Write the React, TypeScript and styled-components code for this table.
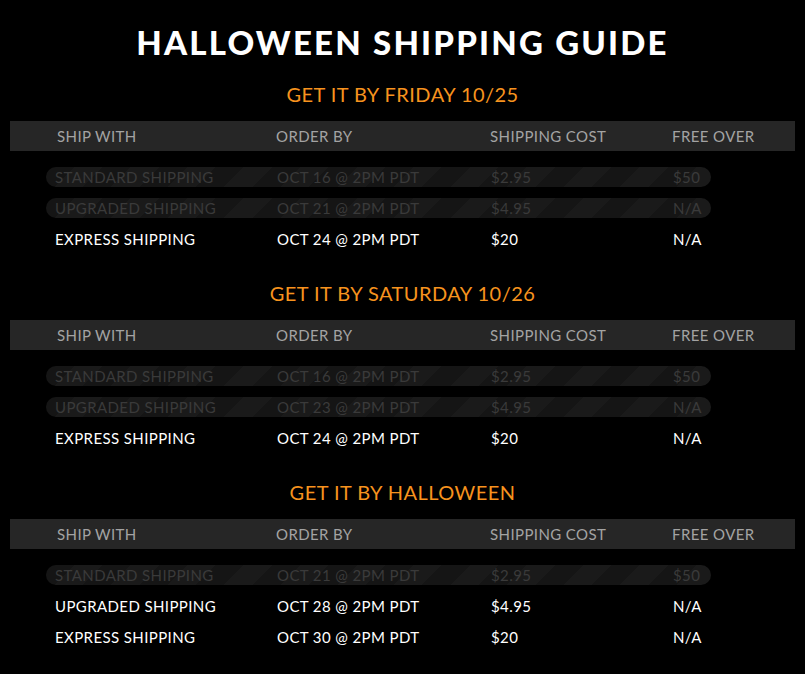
import styled, { createGlobalStyle } from "styled-components";

interface ShipRow {
  method: string;
  orderBy: string;
  cost: string;
  freeOver: string;
  closed?: boolean;
}

interface Section {
  title: string;
  rows: ShipRow[];
}

const sections: Section[] = [
  {
    title: "GET IT BY FRIDAY 10/25",
    rows: [
      { method: "STANDARD SHIPPING", orderBy: "OCT 16 @ 2PM PDT", cost: "$2.95", freeOver: "$50", closed: true },
      { method: "UPGRADED SHIPPING", orderBy: "OCT 21 @ 2PM PDT", cost: "$4.95", freeOver: "N/A", closed: true },
      { method: "EXPRESS SHIPPING", orderBy: "OCT 24 @ 2PM PDT", cost: "$20", freeOver: "N/A" },
    ],
  },
  {
    title: "GET IT BY SATURDAY 10/26",
    rows: [
      { method: "STANDARD SHIPPING", orderBy: "OCT 16 @ 2PM PDT", cost: "$2.95", freeOver: "$50", closed: true },
      { method: "UPGRADED SHIPPING", orderBy: "OCT 23 @ 2PM PDT", cost: "$4.95", freeOver: "N/A", closed: true },
      { method: "EXPRESS SHIPPING", orderBy: "OCT 24 @ 2PM PDT", cost: "$20", freeOver: "N/A" },
    ],
  },
  {
    title: "GET IT BY HALLOWEEN",
    rows: [
      { method: "STANDARD SHIPPING", orderBy: "OCT 21 @ 2PM PDT", cost: "$2.95", freeOver: "$50", closed: true },
      { method: "UPGRADED SHIPPING", orderBy: "OCT 28 @ 2PM PDT", cost: "$4.95", freeOver: "N/A" },
      { method: "EXPRESS SHIPPING", orderBy: "OCT 30 @ 2PM PDT", cost: "$20", freeOver: "N/A" },
    ],
  },
];

const GlobalStyle = createGlobalStyle`
  body {
    margin: 0;
    background: #000;
    font-family: Lato, "Open Sans", sans-serif;
  }
`;

export default function App() {
  return (
    <Page>
      <GlobalStyle />
      <Title>HALLOWEEN SHIPPING GUIDE</Title>
      {sections.map((section) => (
        <SectionBlock key={section.title}>
          <Subtitle>{section.title}</Subtitle>
          <HeaderBar>
            <span>SHIP WITH</span>
            <span>ORDER BY</span>
            <span>SHIPPING COST</span>
            <span>FREE OVER</span>
          </HeaderBar>
          <Rows>
            {section.rows.map((row) => (
              <Row key={row.method} $closed={row.closed}>
                <span>{row.method}</span>
                <span>{row.orderBy}</span>
                <span>{row.cost}</span>
                <span>{row.freeOver}</span>
              </Row>
            ))}
          </Rows>
        </SectionBlock>
      ))}
    </Page>
  );
}

const Page = styled.div`
  width: 805px;
  height: 674px;
  background: #000;
  padding-top: 23px;
  box-sizing: border-box;
  overflow: hidden;
`;

const Title = styled.h1`
  margin: 0;
  height: 40px;
  line-height: 38px;
  text-align: center;
  color: #fff;
  font-size: 33px;
  font-weight: 900;
  letter-spacing: 2.2px;
`;

const SectionBlock = styled.section`
  padding-top: 17px;
  padding-bottom: 13px;
  & + & {
    padding-top: 0;
  }
`;

const Subtitle = styled.h2`
  margin: 0 0 13px;
  height: 28px;
  line-height: 28px;
  text-align: center;
  color: #f7931e;
  font-size: 20px;
  font-weight: 400;
  letter-spacing: 0.45px;
`;

const HeaderBar = styled.div`
  margin: 0 10px;
  height: 30px;
  background: #262626;
  display: grid;
  grid-template-columns: 219px 214px 182px 1fr;
  align-items: center;
  padding-left: 47px;
  color: #a3a3a3;
  font-size: 15px;
  letter-spacing: 0.4px;
`;

const Rows = styled.div`
  display: flex;
  flex-direction: column;
  gap: 11px;
  padding-top: 16px;
  padding-bottom: 17px;
`;

const Row = styled.div<{ $closed?: boolean }>`
  margin-left: 46px;
  width: 665px;
  height: 20px;
  box-sizing: border-box;
  padding-left: 9px;
  border-radius: 10px;
  display: grid;
  grid-template-columns: 222px 214px 182px 1fr;
  align-items: center;
  font-size: 15px;
  letter-spacing: 0.4px;
  color: ${(p) => (p.$closed ? "#3a3a3a" : "#fff")};
  background: ${(p) =>
    p.$closed
      ? "repeating-linear-gradient(135deg, #151515 0px, #151515 20px, #1a1a1a 20px, #1a1a1a 40px)"
      : "transparent"};
  span {
    white-space: nowrap;
  }
`;
